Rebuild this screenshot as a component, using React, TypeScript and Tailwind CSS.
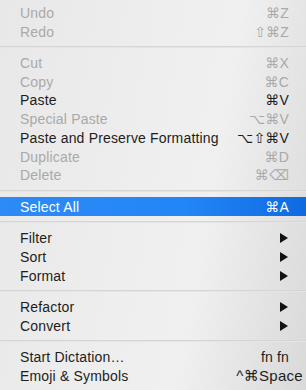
import React from "react";

type Item =
  | { sep: true }
  | { label: string; sc?: string; dis?: boolean; sub?: boolean; sel?: boolean; wide?: boolean; sep?: false };

const items: Item[] = [
  { label: "Undo", sc: "⌘Z", dis: true },
  { label: "Redo", sc: "⇧⌘Z", dis: true },
  { sep: true },
  { label: "Cut", sc: "⌘X", dis: true },
  { label: "Copy", sc: "⌘C", dis: true },
  { label: "Paste", sc: "⌘V" },
  { label: "Special Paste", sc: "⌥⌘V", dis: true },
  { label: "Paste and Preserve Formatting", sc: "⌥⇧⌘V" },
  { label: "Duplicate", sc: "⌘D", dis: true },
  { label: "Delete", sc: "⌘⌫", dis: true },
  { sep: true },
  { label: "Select All", sc: "⌘A", sel: true },
  { sep: true },
  { label: "Filter", sub: true },
  { label: "Sort", sub: true },
  { label: "Format", sub: true },
  { sep: true },
  { label: "Refactor", sub: true },
  { label: "Convert", sub: true },
  { sep: true },
  { label: "Start Dictation…", sc: "fn fn" },
  { label: "Emoji & Symbols", sc: "^⌘Space", wide: true },
];

function Tri() {
  return (
    <svg width="8" height="10" viewBox="0 0 8 10" className="block">
      <path d="M0 0 L8 5 L0 10 Z" fill="#111" />
    </svg>
  );
}

export default function App() {
  return (
    <div
      className="w-[306px] h-[390px] overflow-hidden pt-[3.5px] bg-[linear-gradient(100deg,#e8e8e8_0%,#eeeeee_45%,#f0f0f0_65%,#d9d9d9_100%)]"
      style={{ fontFamily: '"Liberation Sans", "DejaVu Sans", sans-serif' }}
    >
      {items.map((it, i) =>
        it.sep ? (
          <div key={i} className="h-[12.6px] flex items-center">
            <div className="w-full h-[2px] bg-[#d6d6d6] border-b border-[#e4e4e4]" />
          </div>
        ) : (
          <div
            key={i}
            className={
              "h-[18.75px] flex items-center justify-between pl-[20px] pr-[17px] text-[14px] leading-none tracking-[0.17px] " +
              (it.sel
                ? "bg-[linear-gradient(90deg,#2d8af7_0%,#2386f6_60%,#0e6ae0_100%)] text-white"
                : it.dis
                ? "text-[#a9a9a9]"
                : "text-[#1d1d1d]")
            }
          >
            <span className="whitespace-nowrap">{it.label}</span>
            {it.sub ? (
              <span className="pr-[1px]">
                <Tri />
              </span>
            ) : (
              <span
                className={
                  "whitespace-nowrap " +
                  (it.wide ? "mr-[-14px] text-[15px] tracking-[0.3px]" : "")
                }
              >
                {it.sc}
              </span>
            )}
          </div>
        )
      )}
    </div>
  );
}
